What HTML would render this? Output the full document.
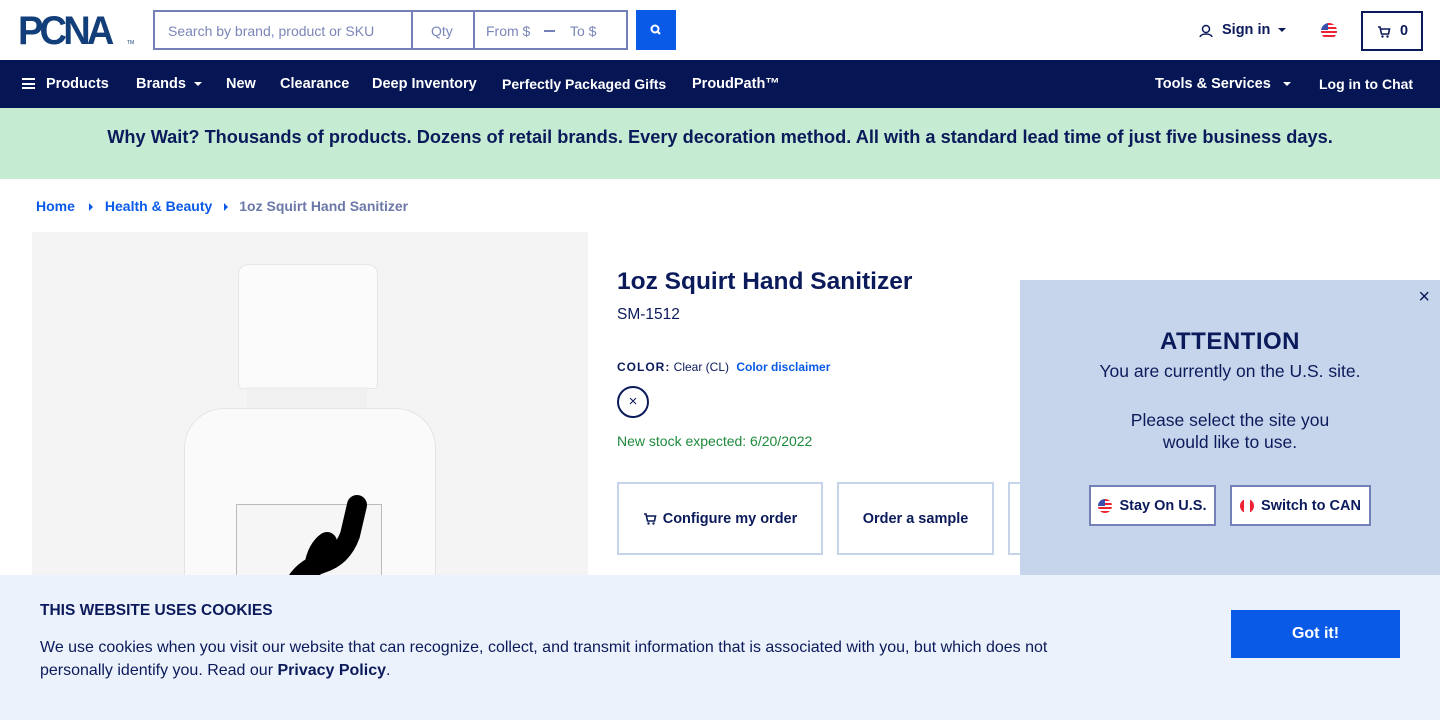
<!DOCTYPE html>
<html><head><meta charset="utf-8"><style>
*{margin:0;padding:0;box-sizing:border-box}
body{width:1440px;height:720px;overflow:hidden;position:relative;font-family:"Liberation Sans",Arial,sans-serif;color:#0b1a5a;background:#fff}
.abs{position:absolute}
.nav a{position:absolute;top:0;line-height:48px;color:#fff;font-size:14.5px;font-weight:bold;white-space:nowrap}
.caret{display:inline-block;width:0;height:0;border-left:4px solid transparent;border-right:4px solid transparent;border-top:4px solid currentColor;vertical-align:middle;margin-left:8px}
.btn{position:absolute;border:2px solid #c6d4ea;background:#fff;font-weight:bold;font-size:14.5px;display:flex;align-items:center;justify-content:center}
.sbtn{position:absolute;top:485px;height:41px;border:2px solid #7481b8;background:#fff;font-weight:bold;font-size:14.5px;display:flex;align-items:center;justify-content:center;gap:7px}
.flag{width:14px;height:14px;border-radius:50%;display:inline-block}
.us{background:linear-gradient(#3c4fa8 0 0) 0 0/7px 7px no-repeat,repeating-linear-gradient(#e23 0 2px,#fff 2px 4px)}
.ca{background:linear-gradient(90deg,#e23 0 4px,#fff 4px 10px,#e23 10px)}
</style></head><body>
<!-- header -->
<div class="abs" style="left:18px;top:12px;font-size:40px;font-weight:900;color:#123e7a;letter-spacing:-4px;line-height:38px;transform:scaleX(0.95);transform-origin:left">PCNA</div>
<div class="abs" style="left:127px;top:40px;font-size:5px;color:#123e7a">TM</div>
<div class="abs" style="left:153px;top:10px;width:475px;height:40px;border:2px solid #7481b8;font-size:14px;color:#7a86b8">
 <span class="abs" style="left:13px;top:11px">Search by brand, product or SKU</span>
 <div class="abs" style="left:256px;top:0;width:2px;height:36px;background:#7481b8"></div>
 <span class="abs" style="left:276px;top:11px">Qty</span>
 <div class="abs" style="left:318px;top:0;width:2px;height:36px;background:#7481b8"></div>
 <span class="abs" style="left:331px;top:11px">From $</span>
 <div class="abs" style="left:389px;top:18px;width:11px;height:2px;background:#7481b8"></div>
 <span class="abs" style="left:415px;top:11px">To $</span>
</div>
<div class="abs" style="left:636px;top:10px;width:40px;height:40px;background:#0a5ae8">
 <svg width="40" height="40"><circle cx="19" cy="19" r="3.5" fill="none" stroke="#fff" stroke-width="2"/><path d="M21.5 21.5L24 24" stroke="#fff" stroke-width="2"/></svg>
</div>
<svg class="abs" style="left:1199px;top:24px" width="14" height="14"><circle cx="7" cy="5" r="3.5" fill="none" stroke="#0b1a5a" stroke-width="1.5"/><path d="M1 13c1-4 11-4 12 0" fill="none" stroke="#0b1a5a" stroke-width="1.5"/></svg>
<div class="abs" style="left:1222px;top:22px;font-size:14.5px;font-weight:bold">Sign in<span class="caret"></span></div>
<span class="abs flag us" style="left:1321px;top:23px;width:16px;height:16px"></span>
<div class="abs" style="left:1361px;top:11px;width:62px;height:40px;border:2px solid #0b1a5a;font-weight:bold;font-size:14.5px">
 <svg class="abs" style="left:14px;top:12px" width="14" height="14"><path d="M1 2h2l1.5 7h7l1-5H4" fill="none" stroke="#0b1a5a" stroke-width="1.6"/><circle cx="5.5" cy="11.5" r="1.2" fill="#0b1a5a"/><circle cx="10.5" cy="11.5" r="1.2" fill="#0b1a5a"/></svg>
 <span class="abs" style="left:37px;top:10px">0</span>
</div>
<!-- nav -->
<div class="abs nav" style="left:0;top:60px;width:1440px;height:48px;background:#061655">
 <a style="left:22px"><span style="display:inline-block;width:13px;height:11px;vertical-align:-1px;margin-right:11px;background:linear-gradient(#fff 0 0) 0 0/13px 2px no-repeat,linear-gradient(#fff 0 0) 0 4.5px/13px 2px no-repeat,linear-gradient(#fff 0 0) 0 9px/13px 2px no-repeat"></span>Products</a>
 <a style="left:136px">Brands<span class="caret"></span></a>
 <a style="left:226px">New</a>
 <a style="left:280px">Clearance</a>
 <a style="left:372px">Deep Inventory</a>
 <a style="left:502px;font-size:14px">Perfectly Packaged Gifts</a>
 <a style="left:692px">ProudPath™</a>
 <a style="left:1155px">Tools &amp; Services<span class="caret" style="margin-left:12px"></span></a>
 <a style="left:1319px;font-size:14px">Log in to Chat</a>
</div>
<div class="abs" style="left:0;top:108px;width:1440px;height:71px;background:#c5ecd3;text-align:center;line-height:58px;font-size:18.2px;font-weight:bold;white-space:nowrap">Why Wait? Thousands of products. Dozens of retail brands. Every decoration method. All with a standard lead time of just five business days.</div>
<!-- breadcrumb -->
<div class="abs" style="left:36px;top:198px;font-size:14px;font-weight:bold;color:#0a5ae8;white-space:nowrap">Home<span style="display:inline-block;border-left:4px solid #0a5ae8;border-top:4px solid transparent;border-bottom:4px solid transparent;margin:0 12px 0 14px"></span>Health &amp; Beauty<span style="display:inline-block;border-left:4px solid #0a5ae8;border-top:4px solid transparent;border-bottom:4px solid transparent;margin:0 11px 0 12px"></span><span style="color:#6b78a8">1oz Squirt Hand Sanitizer</span></div>
<!-- image -->
<div class="abs" style="left:32px;top:232px;width:556px;height:350px;background:#f4f4f4;overflow:hidden">
 <div class="abs" style="left:206px;top:32px;width:140px;height:125px;background:#fbfbfb;border-radius:10px 10px 4px 4px;border:1px solid #e6e6e6"></div>
 <div class="abs" style="left:215px;top:155px;width:120px;height:40px;background:#f0f0f0"></div>
 <div class="abs" style="left:152px;top:176px;width:252px;height:200px;background:#fafafa;border-radius:40px 40px 0 0;border:1px solid #e4e4e4"></div>
 <div class="abs" style="left:204px;top:272px;width:146px;height:100px;border:1px solid #bbb;background:#f6f6f6"></div>
 <svg class="abs" style="left:240px;top:255px" width="110" height="100"><path d="M85 18L78 48Q70 70 50 76Q25 84 18 110M55 55Q45 62 42 80" stroke="#000" stroke-width="20" fill="none" stroke-linecap="round"/></svg>
</div>
<!-- product info -->
<div class="abs" style="left:617px;top:268px;font-size:24.5px;font-weight:bold">1oz Squirt Hand Sanitizer</div>
<div class="abs" style="left:617px;top:306px;font-size:15.5px">SM-1512</div>
<div class="abs" style="left:617px;top:360px;font-size:12px"><b style="letter-spacing:1px">COLOR:</b> Clear (CL) <b style="color:#0a5ae8;margin-left:4px">Color disclaimer</b></div>
<div class="abs" style="left:617px;top:386px;width:32px;height:32px;border:2px solid #0b1a5a;border-radius:50%;text-align:center;line-height:27px;font-size:15px">×</div>
<div class="abs" style="left:617px;top:433px;font-size:14px;color:#1e8a3c">New stock expected: 6/20/2022</div>
<div class="btn" style="left:617px;top:482px;width:206px;height:73px"><svg width="14" height="13" style="margin-right:6px"><path d="M1 2h2l1.5 7h7l1-5H4" fill="none" stroke="#0b1a5a" stroke-width="1.6"/><circle cx="5.5" cy="11.5" r="1.2" fill="#0b1a5a"/><circle cx="10.5" cy="11.5" r="1.2" fill="#0b1a5a"/></svg>Configure my order</div>
<div class="btn" style="left:837px;top:482px;width:157px;height:73px">Order a sample</div>
<div class="btn" style="left:1008px;top:482px;width:30px;height:73px;border-right:none"></div>
<!-- attention -->
<div class="abs" style="left:1020px;top:280px;width:420px;height:300px;background:#c6d5eb;text-align:center">
 <div class="abs" style="right:10px;top:6px;font-size:20px">×</div>
 <div style="margin-top:48px;font-size:24px;font-weight:bold;letter-spacing:0.5px">ATTENTION</div>
 <div style="font-size:17.5px;margin-top:4px;line-height:22px">You are currently on the U.S. site.</div>
 <div style="font-size:17.5px;margin-top:27px;line-height:22px">Please select the site you<br>would like to use.</div>
</div>
<div class="sbtn" style="left:1089px;width:127px"><span class="flag us"></span>Stay On U.S.</div>
<div class="sbtn" style="left:1230px;width:141px"><span class="flag ca"></span>Switch to CAN</div>
<!-- cookies -->
<div class="abs" style="left:0;top:575px;width:1440px;height:145px;background:#ebf2fb">
 <div class="abs" style="left:40px;top:27px;font-size:15.5px;font-weight:bold">THIS WEBSITE USES COOKIES</div>
 <div class="abs" style="left:40px;top:61px;width:1075px;font-size:16px;line-height:23px">We use cookies when you visit our website that can recognize, collect, and transmit information that is associated with you, but which does not personally identify you. Read our <b>Privacy Policy</b>.</div>
 <div class="abs" style="left:1231px;top:35px;width:169px;height:48px;background:#0a5ae8;color:#fff;font-weight:bold;font-size:16px;text-align:center;line-height:48px">Got it!</div>
</div>
</body></html>
